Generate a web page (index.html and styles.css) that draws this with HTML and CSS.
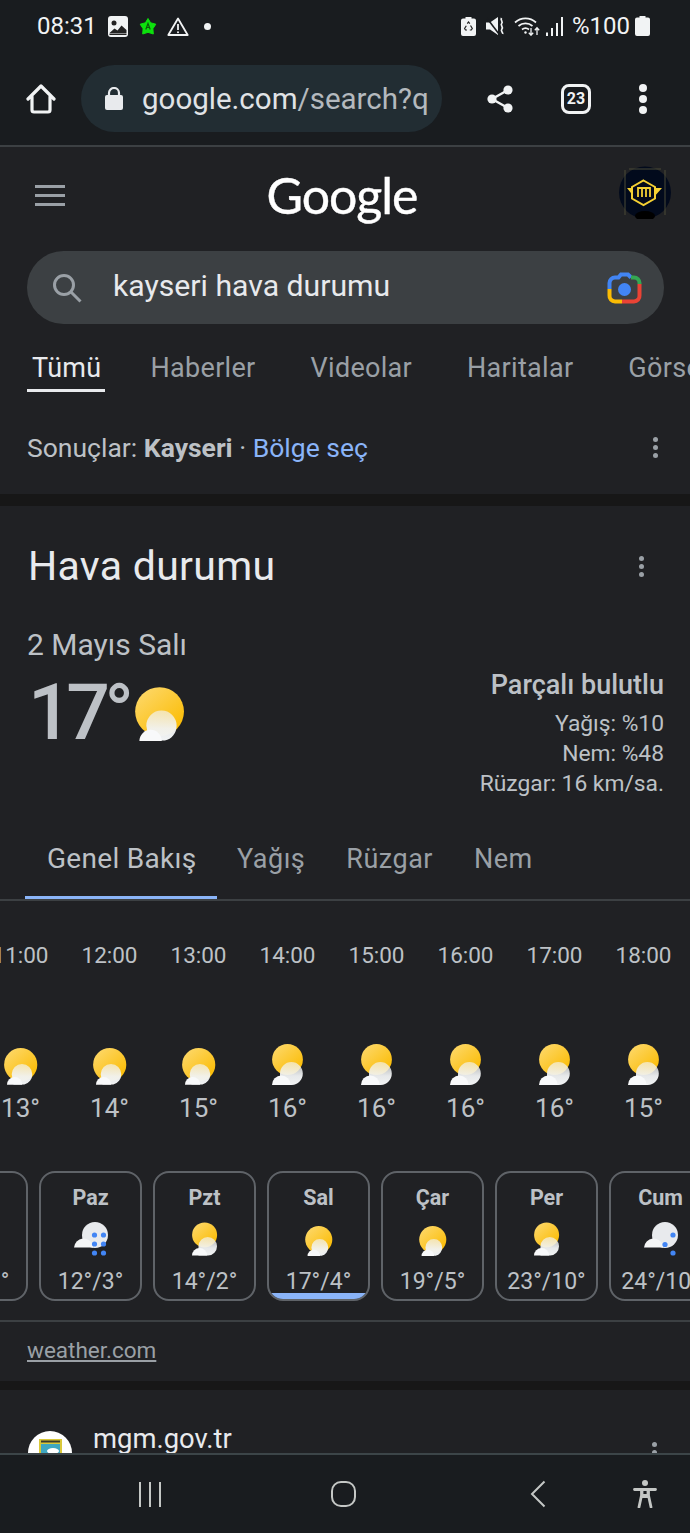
FILE: index.html
```html
<!DOCTYPE html>
<html lang="tr">
<head>
<meta charset="utf-8">
<title>kayseri hava durumu</title>
<link rel="stylesheet" href="styles.css">
</head>
<body>
<svg class="defs" width="0" height="0" aria-hidden="true">
  <defs>
    <linearGradient id="sun" x1="0.15" y1="0.1" x2="0.85" y2="0.9">
      <stop offset="0" stop-color="#fdd663"/><stop offset="1" stop-color="#fbbc04"/>
    </linearGradient>
    <linearGradient id="cloud" x1="0" y1="0" x2="0" y2="1">
      <stop offset="0" stop-color="#f1f3f4" stop-opacity=".65"/><stop offset=".6" stop-color="#f1f3f4" stop-opacity=".95"/><stop offset="1" stop-color="#f1f3f4" stop-opacity="1"/>
    </linearGradient>
    <symbol id="partly" viewBox="0 0 34 38">
      <circle cx="16.700" cy="16.700" r="16.600" fill="url(#sun)"/>
      <path d="M7.700 26.300a10.300 10.300 0 0 1 20.600 0a10.300 10.300 0 0 1-8 10.100H9.500z" fill="url(#cloud)"/>
      <path d="M3 36.700a7.600 7.600 0 0 1 15.200 0z" fill="#f8f9fa"/>
    </symbol>
    <symbol id="mostly" viewBox="0 0 32 41">
      <circle cx="15.500" cy="15.500" r="15.400" fill="url(#sun)"/>
      <path d="M8 29.500a11.400 11.400 0 0 1 22.800 0a11.400 11.400 0 0 1-11 11.400H8z" fill="url(#cloud)"/>
      <path d="M0 40.900a9.300 9.300 0 0 1 18.600 0z" fill="#f8f9fa"/>
    </symbol>
    <symbol id="rain" viewBox="0 0 34 35">
      <circle cx="21" cy="13" r="13" fill="#e8eaed"/>
      <path d="M0 25.500a9.700 9.700 0 0 1 19-2v2z" fill="#f4f5f6"/>
      <g fill="#4285f4"><circle cx="20.500" cy="13" r="2.600"/><circle cx="29.500" cy="13" r="2.600"/><circle cx="20.500" cy="22" r="2.600"/><circle cx="29.500" cy="22" r="2.600"/><circle cx="20.500" cy="31" r="2.600"/><circle cx="29.500" cy="31" r="2.600"/></g>
    </symbol>
    <symbol id="showers" viewBox="0 0 34 35">
      <circle cx="21" cy="13" r="13" fill="#e8eaed"/>
      <path d="M0 25.500a9.700 9.700 0 0 1 19-2v2z" fill="#f4f5f6"/>
      <g fill="#4285f4"><circle cx="29" cy="13" r="2.600"/><circle cx="21" cy="22.500" r="2.600"/><circle cx="29" cy="31" r="2.600"/></g>
    </symbol>
  </defs>
</svg>
<div class="screen">
  <div class="statusbar">
    <span class="clock">08:31</span>
    <svg class="st-img" width="20" height="21" viewBox="0 0 20 21"><rect width="20" height="21" rx="3" fill="#f1f3f4"/><rect x="1.500" y="17.500" width="17" height="1.500" fill="#222"/><circle cx="6" cy="7" r="2.500" fill="#222"/><path d="M1.500 17l5-4.500 3 2 4-5 5 4.500v3z" fill="#222"/></svg>
    <svg class="st-star" width="18" height="17" viewBox="0 0 18 17"><path d="M9 .5l2.600 4.300 5.200 1.400-2.900 4.500.4 5.300-5.300-1.700-5.300 1.700.4-5.300L1.200 6.200l5.200-1.400z" fill="#0de00d" stroke="#0de00d" stroke-width="1" stroke-linejoin="round"/><path d="M6.800 11.500L9 5.500l2.200 6M7.500 9.500h3" fill="none" stroke="#0a5a0a" stroke-width="1.200"/></svg>
    <svg class="st-warn" width="22" height="19" viewBox="0 0 22 19"><path d="M11 1.500L1.300 18h19.400z" fill="none" stroke="#f1f3f4" stroke-width="1.800" stroke-linejoin="round"/><path d="M11 7v6" stroke="#f1f3f4" stroke-width="1.800"/><circle cx="11" cy="15.200" r="1" fill="#f1f3f4"/></svg>
    <span class="st-dot"></span>
    <span class="st-spacer"></span>
    <svg class="st-recycle" width="15" height="19" viewBox="0 0 15 19"><path d="M4.500 0h6v1.500h2.500a2 2 0 0 1 2 2V17a2 2 0 0 1-2 2H2a2 2 0 0 1-2-2V3.500a2 2 0 0 1 2-2h2.500z" fill="#f1f3f4"/><path d="M6.300 6.700l1.200-1.700 1.300 1.700M9.500 8.500l1.800 3-1 1.500H8.800M6 13H4.500l-.9-1.500 1.700-2.800" fill="none" stroke="#222" stroke-width="1.200"/></svg>
    <svg class="st-mute" width="20" height="18" viewBox="0 0 20 18"><path d="M0 5.500h4L12 0v18l-8-5.500H0z" fill="#f1f3f4"/><path d="M0 0l13 17" stroke="#191c1f" stroke-width="1.600"/><path d="M15.500 1c-1.500 2.500 2 3.500.2 5.500s2 3 .2 5.500 1.300 3 .8 5" fill="none" stroke="#f1f3f4" stroke-width="1.700"/></svg>
    <svg class="st-wifi" width="26" height="20" viewBox="0 0 26 20"><path d="M1 6.500C7 1 16 1 22 6.500M4.500 10c4-3.500 10-3.500 14 0M8 13.500c2-1.600 5-1.600 7 0" fill="none" stroke="#f1f3f4" stroke-width="1.700"/><circle cx="11.500" cy="16.500" r="1.200" fill="#f1f3f4"/><path d="M17 12v7M14.800 16.800l2.200 2.400 2.200-2.400M23 19v-7M20.800 14.200l2.200-2.400 2.200 2.400" fill="none" stroke="#f1f3f4" stroke-width="1.300"/></svg>
    <svg class="st-signal" width="18" height="19" viewBox="0 0 18 19"><g fill="#f1f3f4"><rect x="0" y="15.500" width="2" height="3.500"/><rect x="5" y="11" width="2" height="8"/><rect x="10" y="6" width="2" height="13"/><rect x="15" y="0" width="2" height="19"/></g></svg>
    <span class="st-pct">%100</span>
    <svg class="st-batt" width="15" height="20" viewBox="0 0 15 20"><path d="M4.500 0h6v1.500h2.500a2 2 0 0 1 2 2V18a2 2 0 0 1-2 2H2a2 2 0 0 1-2-2V3.500a2 2 0 0 1 2-2h2.500z" fill="#f1f3f4"/></svg>
  </div>
  <div class="toolbar">
    <svg class="tb-home" width="30" height="30" viewBox="0 0 30 30"><path d="M2 15L15 2l13 13M6 12.500V26a2 2 0 0 0 2 2h14a2 2 0 0 0 2-2V12.500" fill="none" stroke="#f1f3f4" stroke-width="3.200" stroke-linejoin="round" stroke-linecap="round"/></svg>
    <div class="urlbar">
      <svg width="18" height="23" viewBox="0 0 18 23"><path d="M4 9V6a5 5 0 0 1 10 0v3" fill="none" stroke="#e8eaed" stroke-width="2.200"/><rect y="8" width="18" height="15" rx="2" fill="#e8eaed"/></svg>
      <span class="urltext"><span class="host">google.com</span>/search?q=</span>
    </div>
    <svg class="tb-share" width="26" height="28" viewBox="0 0 26 28"><path d="M21 5L5 14l16 9" fill="none" stroke="#f1f3f4" stroke-width="2.400"/><circle cx="21" cy="5" r="4.600" fill="#f1f3f4"/><circle cx="5" cy="14" r="4.600" fill="#f1f3f4"/><circle cx="21" cy="23" r="4.600" fill="#f1f3f4"/></svg>
    <span class="tabcount">23</span>
    <span class="tb-dots"><i></i><i></i><i></i></span>
  </div>
  <main class="page">
    <header class="g-head">
      <span class="burger"><i></i><i></i><i></i></span>
      <span class="g-logo">Google</span>
      <svg class="avatar" width="52" height="53" viewBox="0 0 52 53"><circle cx="26" cy="26.500" r="26" fill="#020a1c"/><path d="M6 4V49M46 4V49M10 3h32" stroke="#4a4a36" stroke-width="1"/><ellipse cx="26" cy="50" rx="10" ry="5" fill="#000"/><path d="M8 22h11v9.500h-3.500zM43 22H31v9.500h3.500z" fill="#f5d033"/><path d="M24.500 14.500l11.500 6.500v11.500l-11.500 6.500L13 32.500V21z" fill="#04091a" stroke="#f5d033" stroke-width="2"/><path d="M19 31v-9h12v9M23 22v9M27 22v9" fill="none" stroke="#f5d033" stroke-width="1.800"/></svg>
    </header>
    <div class="searchbox">
      <svg width="30" height="30" viewBox="0 0 30 30"><circle cx="12" cy="12" r="9.500" fill="none" stroke="#9aa0a6" stroke-width="3"/><path d="M19 19l9.500 9.500" stroke="#9aa0a6" stroke-width="3"/></svg>
      <span class="query">kayseri hava durumu</span>
      <svg class="lens" width="35" height="32" viewBox="0 0 35 32"><path d="M2.500 17V11a5.500 5.500 0 0 1 5.500-5.500h3.500L14 2.500h7l3 3" fill="none" stroke="#4285f4" stroke-width="4"/><path d="M24 5.500h3A5.500 5.500 0 0 1 32.500 11v1" fill="none" stroke="#34a853" stroke-width="4"/><path d="M32.500 12v11.500A5.500 5.500 0 0 1 27 29.500H15" fill="none" stroke="#ea4335" stroke-width="4"/><path d="M2.500 17v6.500A5.500 5.500 0 0 0 8 29.500h7" fill="none" stroke="#fbbc04" stroke-width="4"/><circle cx="17.500" cy="17.500" r="6.500" fill="#4285f4"/></svg>
    </div>
    <nav class="g-tabs">
      <span class="g-tab is-active">Tümü</span>
      <span class="g-tab">Haberler</span>
      <span class="g-tab">Videolar</span>
      <span class="g-tab">Haritalar</span>
      <span class="g-tab">Görseller</span>
    </nav>
    <div class="location">
      <span>Sonuçlar: <b>Kayseri</b> · <a class="blue">Bölge seç</a></span>
      <span class="vdots"><i></i><i></i><i></i></span>
    </div>
    <div class="gutter"></div>
    <section class="weather">
      <div class="w-title">
        <h1>Hava durumu</h1>
        <span class="vdots"><i></i><i></i><i></i></span>
      </div>
      <div class="w-date">2 Mayıs Salı</div>
      <div class="w-now">
        <div class="w-temp">
          <span class="bigtemp">17°</span>
          <svg class="bigicon"><use href="#partly"/></svg>
        </div>
        <div class="w-info">
          <div class="w-cond">Parçalı bulutlu</div>
          <div class="w-line">Yağış: %10</div>
          <div class="w-line">Nem: %48</div>
          <div class="w-line">Rüzgar: 16 km/sa.</div>
        </div>
      </div>
      <div class="w-tabs">
        <span class="w-tab is-active">Genel Bakış</span>
        <span class="w-tab">Yağış</span>
        <span class="w-tab">Rüzgar</span>
        <span class="w-tab">Nem</span>
      </div>
      <div class="hours">
        <div class="hour"><span class="h-time">11:00</span><svg class="ic-a"><use href="#partly"/></svg><span class="h-temp">13°</span></div>
        <div class="hour"><span class="h-time">12:00</span><svg class="ic-a"><use href="#partly"/></svg><span class="h-temp">14°</span></div>
        <div class="hour"><span class="h-time">13:00</span><svg class="ic-a"><use href="#partly"/></svg><span class="h-temp">15°</span></div>
        <div class="hour"><span class="h-time">14:00</span><svg class="ic-b"><use href="#mostly"/></svg><span class="h-temp">16°</span></div>
        <div class="hour"><span class="h-time">15:00</span><svg class="ic-b"><use href="#mostly"/></svg><span class="h-temp">16°</span></div>
        <div class="hour"><span class="h-time">16:00</span><svg class="ic-b"><use href="#mostly"/></svg><span class="h-temp">16°</span></div>
        <div class="hour"><span class="h-time">17:00</span><svg class="ic-b"><use href="#mostly"/></svg><span class="h-temp">16°</span></div>
        <div class="hour"><span class="h-time">18:00</span><svg class="ic-b"><use href="#mostly"/></svg><span class="h-temp">15°</span></div>
      </div>
      <div class="days">
        <div class="day"><span class="d-name">Cmt</span><svg class="d-rain"><use href="#rain"/></svg><span class="d-temp">11°/3°</span></div>
        <div class="day"><span class="d-name">Paz</span><svg class="d-rain"><use href="#rain"/></svg><span class="d-temp">12°/3°</span></div>
        <div class="day"><span class="d-name">Pzt</span><svg class="d-b"><use href="#mostly"/></svg><span class="d-temp">14°/2°</span></div>
        <div class="day is-today"><span class="d-name">Sal</span><svg class="d-a"><use href="#partly"/></svg><span class="d-temp">17°/4°</span></div>
        <div class="day"><span class="d-name">Çar</span><svg class="d-a"><use href="#partly"/></svg><span class="d-temp">19°/5°</span></div>
        <div class="day"><span class="d-name">Per</span><svg class="d-b"><use href="#mostly"/></svg><span class="d-temp">23°/10°</span></div>
        <div class="day"><span class="d-name">Cum</span><svg class="d-rain"><use href="#showers"/></svg><span class="d-temp">24°/10°</span></div>
      </div>
      <div class="source"><a>weather.com</a></div>
    </section>
    <div class="gutter gutter-b"></div>
    <section class="result">
      <svg class="favicon" width="44" height="44" viewBox="0 0 44 44"><circle cx="22" cy="22" r="22" fill="#fff"/><rect x="11" y="8" width="23" height="18" fill="#d9c83a"/><path d="M13 10.500h19" stroke="#3a3a2a" stroke-width="2"/><rect x="13" y="13" width="19" height="13" fill="#3fa7c0"/><ellipse cx="25" cy="20" rx="6" ry="3" fill="#fff"/></svg>
      <span class="r-site">mgm.gov.tr</span>
      <span class="vdots r-dots"><i></i><i></i><i></i></span>
    </section>
  </main>
  <footer class="navbar">
    <span class="nav-recents"><i></i><i></i><i></i></span>
    <span class="nav-home"></span>
    <svg class="nav-back" width="16" height="28" viewBox="0 0 16 28"><path d="M14.500 1.500L2 14l12.500 12.500" fill="none" stroke="#c4c7c5" stroke-width="2"/></svg>
    <svg class="nav-a11y" width="24" height="28" viewBox="0 0 24 28"><circle cx="12" cy="3" r="3" fill="#c4c7c5"/><path d="M1.500 9.500h21M8.500 9.500v6L6 27M15.500 9.500v6L18 27M8.500 15.500h7M9 9.500h6v7H9z" fill="none" stroke="#c4c7c5" stroke-width="2.800" stroke-linecap="round"/></svg>
  </footer>
</div>
</body>
</html>
```
FILE: styles.css
```css
* { box-sizing: border-box; }
html, body { margin: 0; padding: 0; background: #202124; }
body { font-family: Roboto, "Noto Sans", sans-serif; color: #bdc1c6; }
.defs { position: absolute; }
i { display: block; flex: none; }
svg { display: block; flex: none; }
a { color: inherit; }

.screen { width: 690px; height: 1533px; overflow: hidden; display: flex; flex-direction: column; }

.statusbar { height: 52px; flex: none; background: #191c1f; display: flex; align-items: center; padding: 0 40px 0 37px; color: #f1f3f4; }
.clock { font-size: 24px; width: 58px; }
.st-img { margin-left: 13px; }
.st-star { margin-left: 11px; }
.st-warn { margin-left: 10px; }
.st-dot { width: 7px; height: 7px; border-radius: 50%; background: #f1f3f4; margin-left: 15px; }
.st-spacer { flex: 1; }
.st-mute { margin-left: 10px; }
.st-wifi { margin-left: 8px; }
.st-signal { margin-left: 6px; }
.st-pct { font-size: 24px; margin-left: 8px; width: 60px; }
.st-batt { margin-left: 3px; }

.toolbar { height: 95px; flex: none; background: #191c1f; border-bottom: 2px solid #3c4043; display: flex; align-items: center; padding: 0 0 0 26px; }
.urlbar { width: 361px; height: 67px; margin-left: 25px; border-radius: 34px; background: #222d33; display: flex; align-items: center; padding: 0 14px 0 24px; overflow: hidden; }
.urltext { font-size: 29.500px; color: #b4b9be; margin-left: 19px; white-space: nowrap; overflow: hidden; flex: 1; }
.host { color: #e0e3e6; }
.tb-share { margin-left: 45px; }
.tabcount { width: 30px; height: 30px; margin-left: 48px; border: 3px solid #f1f3f4; border-radius: 8px; font-size: 16px; font-weight: 700; color: #f1f3f4; display: flex; align-items: center; justify-content: center; }
.tb-dots { margin-left: 48px; display: flex; flex-direction: column; gap: 3px; }
.tb-dots i { width: 8px; height: 8px; border-radius: 50%; background: #f1f3f4; }

.page { flex: 1; min-height: 0; overflow: hidden; background: #202124; }

.g-head { height: 104px; display: flex; align-items: center; justify-content: space-between; padding: 0 19px 8px 35px; }
.burger { width: 30px; display: flex; flex-direction: column; gap: 6px; }
.burger i { height: 3px; background: #9aa0a6; }
.g-logo { font-family: Lato, sans-serif; font-size: 50px; line-height: 60px; color: #fff; letter-spacing: -1px; -webkit-text-stroke: .4px #fff; }
.avatar { margin-top: -5px; }

.searchbox { margin: 0 26px 0 27px; height: 73px; border-radius: 37px; background: #3c4043; display: flex; align-items: center; padding: 0 22px 0 25px; }
.query { flex: 1; margin-left: 31px; font-size: 30.200px; color: #e8eaed; padding-bottom: 4px; }

.g-tabs { margin-top: 20px; height: 48px; display: flex; gap: 45px; padding-left: 27px; white-space: nowrap; }
.g-tab { font-size: 27px; letter-spacing: .3px; line-height: 48px; height: 48px; padding: 0 5px; color: #9aa0a6; flex: none; }
.g-tab.is-active { color: #e8eaed; border-bottom: 3px solid #e8eaed; padding-right: 3px; margin-right: -4px; }

.location { height: 102px; padding: 8px 32px 0 27px; display: flex; align-items: center; justify-content: space-between; font-size: 26.500px; color: #bdc1c6; }
.location b { font-weight: 700; }
.blue { color: #8ab4f8; }
.vdots { display: flex; flex-direction: column; gap: 3px; }
.vdots i { width: 5px; height: 5px; border-radius: 50%; background: #9aa0a6; }

.gutter { height: 12px; background: #171717; }
.gutter-b { height: 9px; }

.w-title { height: 120px; padding: 0 46px 0 28px; display: flex; align-items: center; justify-content: space-between; }
.w-title h1 { margin: 0; font-size: 41px; font-weight: 400; letter-spacing: .3px; color: #e8eaed; }
.w-date { font-size: 30px; line-height: 38px; padding-left: 27px; }
.w-now { display: flex; justify-content: space-between; padding: 0 26px 0 28px; height: 155px; }
.w-temp { display: flex; align-items: flex-start; }
.bigtemp { font-size: 77px; font-weight: 500; line-height: 98px; letter-spacing: -5.500px; }
.bigicon { width: 50px; height: 56px; margin: 23px 0 0 7px; }
.w-info { text-align: right; padding-top: 6px; }
.w-cond { font-size: 27px; line-height: 30px; font-weight: 500; margin-bottom: 9px; }
.w-line { font-size: 22.800px; line-height: 30px; }

.w-tabs { height: 82px; display: flex; padding-left: 25px; border-bottom: 2px solid #3c4043; }
.w-tab { font-size: 27px; letter-spacing: .5px; line-height: 80px; padding: 0 20.500px; color: #9aa0a6; height: 80px; }
.w-tab.is-active { font-size: 28px; letter-spacing: .3px; color: #bdc1c6; border-bottom: 3px solid #8ab4f8; padding: 0 20px 0 22px; }

.hours { display: flex; margin-left: -24px; height: 270px; }
.hour { flex: none; width: 89px; height: 270px; display: flex; flex-direction: column; align-items: center; }
.h-time { font-size: 22.500px; line-height: 28px; margin-top: 40px; }
.ic-a { width: 34px; height: 38px; margin-top: 79px; }
.ic-b { width: 32px; height: 41px; margin-top: 75px; }
.h-temp { font-size: 26px; line-height: 30px; margin-top: 7px; }
.hour:has(.ic-b) .h-temp { margin-top: 8px; }

.days { display: flex; gap: 11px; margin-left: -75px; height: 130px; }
.day { flex: none; width: 103px; height: 130px; border: 2px solid #5f6368; border-radius: 16px; display: flex; flex-direction: column; align-items: center; position: relative; overflow: hidden; }
.d-name { font-size: 21.500px; font-weight: 700; line-height: 26px; margin-top: 12px; }
.d-rain { width: 34px; height: 35px; margin-top: 11px; }
.d-a { width: 28px; height: 31px; margin-top: 15px; }
.d-b { width: 26px; height: 34px; margin-top: 11px; }
.day .d-temp { font-size: 23px; line-height: 28px; position: absolute; left: 0; right: 0; bottom: 3px; text-align: center; white-space: nowrap; }
.is-today::after { content: ""; position: absolute; left: 0; right: 0; bottom: 0; height: 6px; background: #8ab4f8; }

.source { margin-top: 19px; height: 61px; border-top: 2px solid #3c4043; display: flex; align-items: center; padding: 0 0 3px 27px; font-size: 22.500px; color: #9aa0a6; }
.source a { text-decoration: underline; }

.result { display: flex; height: 62px; padding: 41px 33px 0 28px; }
.r-site { font-size: 27.400px; line-height: 30px; color: #e8eaed; margin: -7px 0 0 21px; flex: 1; }
.r-dots { margin-top: 11px; align-self: flex-start; }

.navbar { height: 80px; flex: none; background: #191c1f; border-top: 2px solid #3c4548; display: flex; align-items: center; padding: 0 33px 0 139px; }
.nav-recents { display: flex; gap: 8px; height: 25px; }
.nav-recents i { width: 2px; height: 25px; background: #c4c7c5; }
.nav-home { width: 26px; height: 26px; margin-left: 170px; border: 2.500px solid #c4c7c5; border-radius: 10px; }
.nav-back { margin-left: 174px; }
.nav-a11y { margin-left: 87px; }
```
